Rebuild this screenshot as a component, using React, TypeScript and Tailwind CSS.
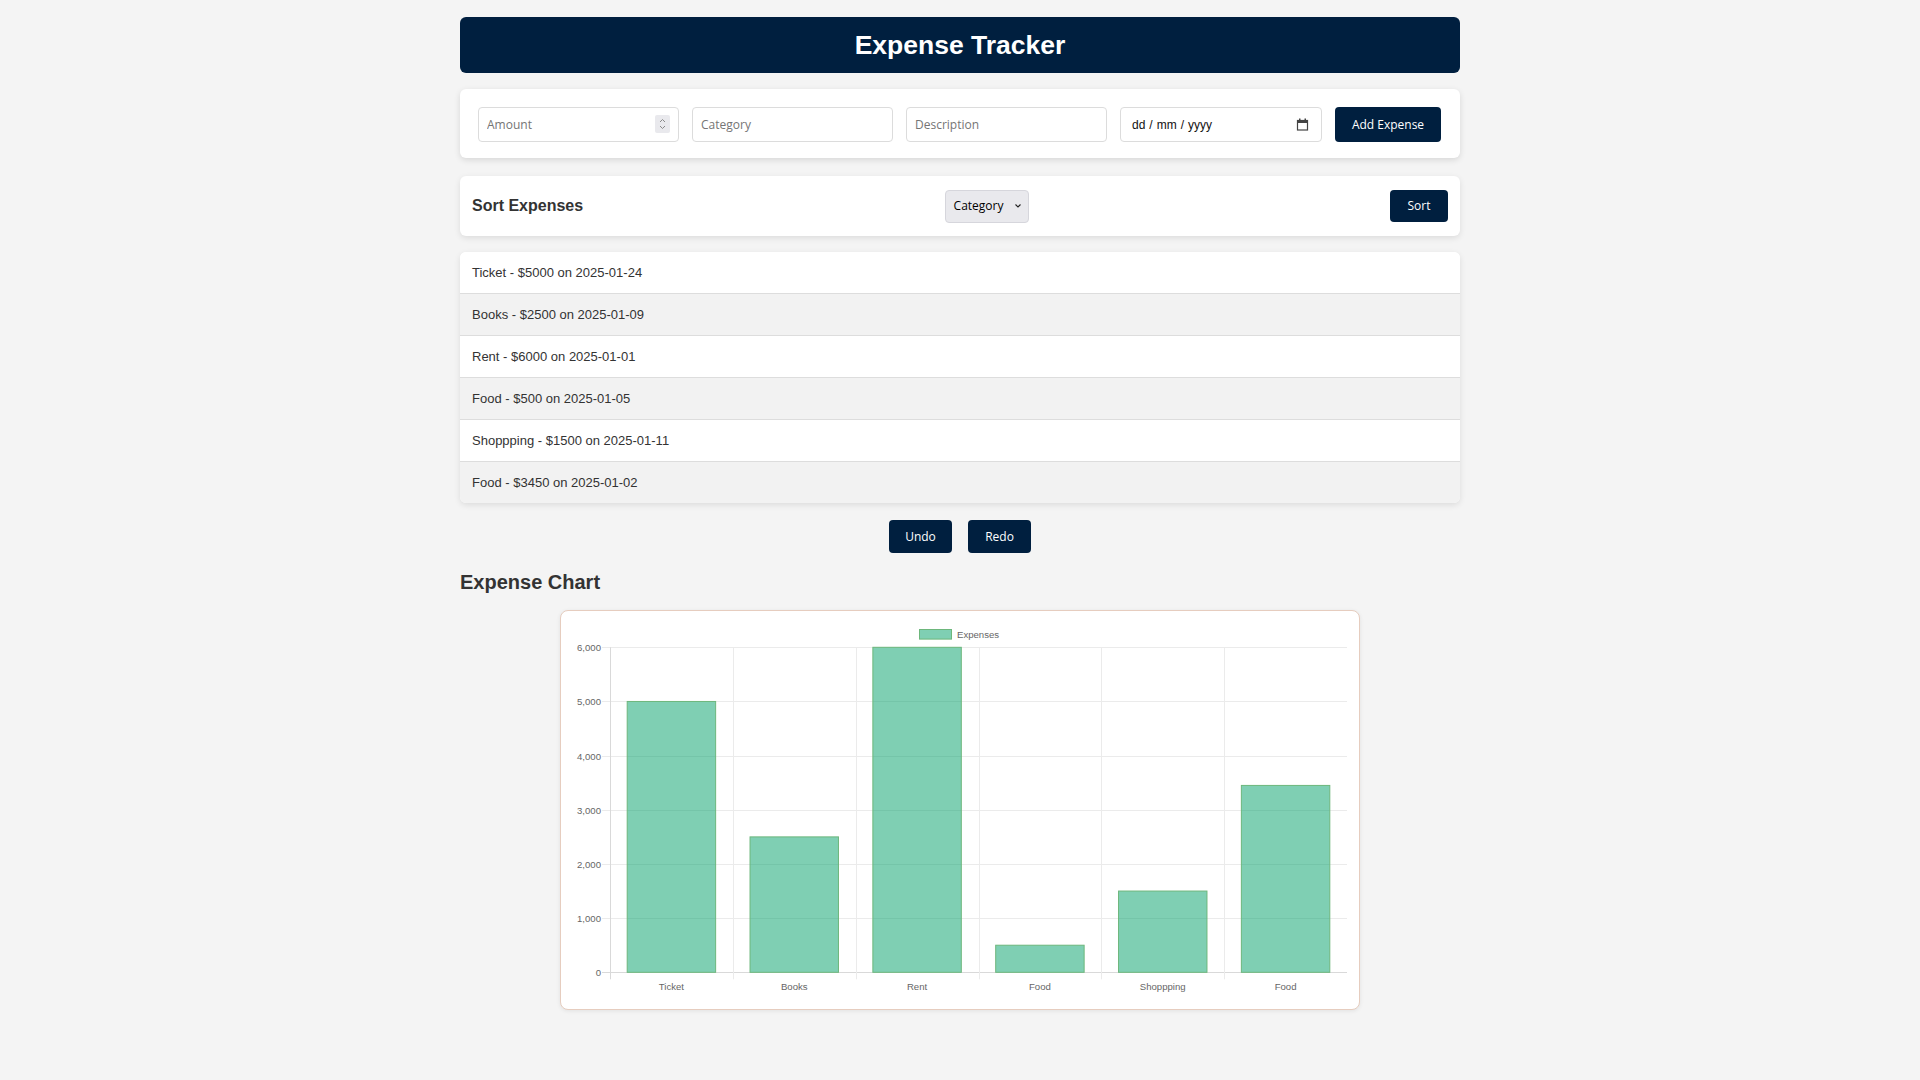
import React from "react";

const expenses = [
  { c: "Ticket", a: 5000, d: "2025-01-24" },
  { c: "Books", a: 2500, d: "2025-01-09" },
  { c: "Rent", a: 6000, d: "2025-01-01" },
  { c: "Food", a: 500, d: "2025-01-05" },
  { c: "Shoppping", a: 1500, d: "2025-01-11" },
  { c: "Food", a: 3450, d: "2025-01-02" },
];

function Chart() {
  const x0 = 49;
  const x1 = 786;
  const yTop = 36.3;
  const yZero = 361.3;
  const per = (yZero - yTop) / 6000;
  const cw = (x1 - x0) / 6;
  const bw = cw * 0.72;
  const ticks = [0, 1000, 2000, 3000, 4000, 5000, 6000];
  const font = "'Liberation Sans', Arial, sans-serif";
  return (
    <svg width="798" height="398" viewBox="0 0 798 398" className="block">
      <rect x="358.5" y="18.5" width="32" height="9.6" fill="rgba(0,160,104,0.5)" stroke="#6db77c" strokeWidth="1" />
      <text x="396" y="26.5" fontSize="9.6" fill="#666" fontFamily={font}>Expenses</text>
      {ticks.map((t) => {
        const y = Math.round(yZero - t * per) + 0.5;
        return (
          <g key={t}>
            <line x1={41} x2={x1} y1={y} y2={y} stroke={t === 0 ? "#d9d9d9" : "#ebebeb"} strokeWidth="1" />
            <text x="40" y={y + 3.3} fontSize="9.6" fill="#666" textAnchor="end" fontFamily={font}>
              {t.toLocaleString("en-US")}
            </text>
          </g>
        );
      })}
      {[0, 1, 2, 3, 4, 5].map((i) => {
        const x = Math.round(x0 + cw * i) + 0.5;
        return (
          <line key={i} x1={x} x2={x} y1={yTop} y2={yZero + 7} stroke={i === 0 ? "#d9d9d9" : "#ebebeb"} strokeWidth="1" />
        );
      })}
      {expenses.map((e, i) => {
        const cx = x0 + cw * (i + 0.5);
        const h = e.a * per;
        return (
          <g key={i}>
            <rect x={cx - bw / 2} y={yZero - h} width={bw} height={h} fill="rgba(0,160,104,0.5)" stroke="#6db77c" strokeWidth="1" />
            <text x={cx} y="379" fontSize="9.6" fill="#666" textAnchor="middle" fontFamily={font}>
              {e.c}
            </text>
          </g>
        );
      })}
    </svg>
  );
}

export default function App() {
  return (
    <div className="min-h-screen bg-[#f4f4f4] pt-[17px] pb-[40px] font-['Liberation_Sans',Arial,sans-serif] text-[#333]">
      <div className="w-[1000px] mx-auto">
        <header className="h-[56px] rounded-[6px] bg-[#001f3f] flex items-center justify-center">
          <h1 className="text-[26.5px] font-bold text-white leading-none">Expense Tracker</h1>
        </header>

        <div className="mt-[16px] h-[69px] bg-white rounded-[6px] shadow-[0_2px_6px_rgba(0,0,0,0.12)] px-[18px] pt-[18px] flex gap-[13px] font-['Open_Sans',sans-serif] text-[12px]">
          <div className="relative w-[201px] shrink-0 h-[35px]">
            <input
              placeholder="Amount"
              className="w-full h-full border border-[#dcdcdc] rounded-[4px] pl-[8px] pr-[28px] outline-none placeholder:text-[#757575]"
            />
            <div className="absolute right-[9px] top-[8px] w-[15px] h-[18px] bg-[#e9e9ed] rounded-[2px] flex flex-col items-center justify-center gap-[2px]">
              <svg width="7" height="5" viewBox="0 0 7 5"><path d="M1 4 L3.5 1.5 L6 4" fill="none" stroke="#8a8a8a" strokeWidth="1" /></svg>
              <svg width="7" height="5" viewBox="0 0 7 5"><path d="M1 1 L3.5 3.5 L6 1" fill="none" stroke="#8a8a8a" strokeWidth="1" /></svg>
            </div>
          </div>
          <input
            placeholder="Category"
            className="w-[201px] shrink-0 h-[35px] border border-[#dcdcdc] rounded-[4px] px-[8px] outline-none placeholder:text-[#757575]"
          />
          <input
            placeholder="Description"
            className="w-[201px] shrink-0 h-[35px] border border-[#dcdcdc] rounded-[4px] px-[8px] outline-none placeholder:text-[#757575]"
          />
          <div className="w-[202px] shrink-0 h-[35px] border border-[#dcdcdc] rounded-[4px] pl-[11px] pr-[12px] flex items-center justify-between">
            <div className="flex items-center gap-[4px] text-[12px] text-[#111] font-['Liberation_Sans',Arial,sans-serif]">
              <span>dd</span>
              <span>/</span>
              <span>mm</span>
              <span>/</span>
              <span>yyyy</span>
            </div>
            <svg width="13" height="13" viewBox="0 0 13 13">
              <rect x="1.5" y="2.5" width="10" height="9.5" fill="none" stroke="#444" strokeWidth="1.2" />
              <rect x="1.5" y="2.5" width="10" height="2.5" fill="#444" />
              <rect x="3" y="0.5" width="1.5" height="2.5" fill="#444" />
              <rect x="8.5" y="0.5" width="1.5" height="2.5" fill="#444" />
            </svg>
          </div>
          <button className="w-[106px] shrink-0 h-[35px] rounded-[4px] bg-[#001f3f] text-white text-[12px]">Add Expense</button>
        </div>

        <div className="mt-[18px] h-[60px] bg-white rounded-[6px] shadow-[0_2px_6px_rgba(0,0,0,0.1)] px-[12px] flex items-center justify-between">
          <h2 className="text-[16px] font-bold text-[#333]">Sort Expenses</h2>
          <div className="w-[84px] h-[33px] bg-[#e9e9ed] border border-[#d6d6dc] rounded-[4px] pl-[8px] pr-[6px] flex items-center justify-between font-['Open_Sans',sans-serif] text-[12px] text-black">
            <span>Category</span>
            <svg width="8" height="6" viewBox="0 0 8 6"><path d="M1.5 1.5 L4 4 L6.5 1.5" fill="none" stroke="#222" strokeWidth="1.1" /></svg>
          </div>
          <button className="w-[58px] h-[32px] rounded-[4px] bg-[#001f3f] text-white text-[12px] font-['Open_Sans',sans-serif]">Sort</button>
        </div>

        <ul className="mt-[16px] bg-white rounded-[6px] shadow-[0_2px_6px_rgba(0,0,0,0.1)] overflow-hidden">
          {expenses.map((e, i) => (
            <li
              key={i}
              className={`px-[12px] py-[13px] text-[13px] leading-[15px] text-[#333] ${i % 2 === 1 ? "bg-[#f2f2f2]" : "bg-white"} ${i < expenses.length - 1 ? "border-b border-[#dddddd]" : ""}`}
            >
              {e.c} - ${e.a} on {e.d}
            </li>
          ))}
        </ul>

        <div className="mt-[17px] flex justify-center gap-[16px] font-['Open_Sans',sans-serif]">
          <button className="w-[63px] h-[33px] rounded-[4px] bg-[#001f3f] text-white text-[12px]">Undo</button>
          <button className="w-[63px] h-[33px] rounded-[4px] bg-[#001f3f] text-white text-[12px]">Redo</button>
        </div>

        <h2 className="mt-[18px] text-[20px] font-bold leading-[23px] text-[#333]">Expense Chart</h2>

        <div className="mt-[16px] mx-auto w-[800px] h-[400px] bg-white border border-[#e6cdbf] rounded-[8px] shadow-[0_1px_4px_rgba(0,0,0,0.08)]">
          <Chart />
        </div>
      </div>
    </div>
  );
}
